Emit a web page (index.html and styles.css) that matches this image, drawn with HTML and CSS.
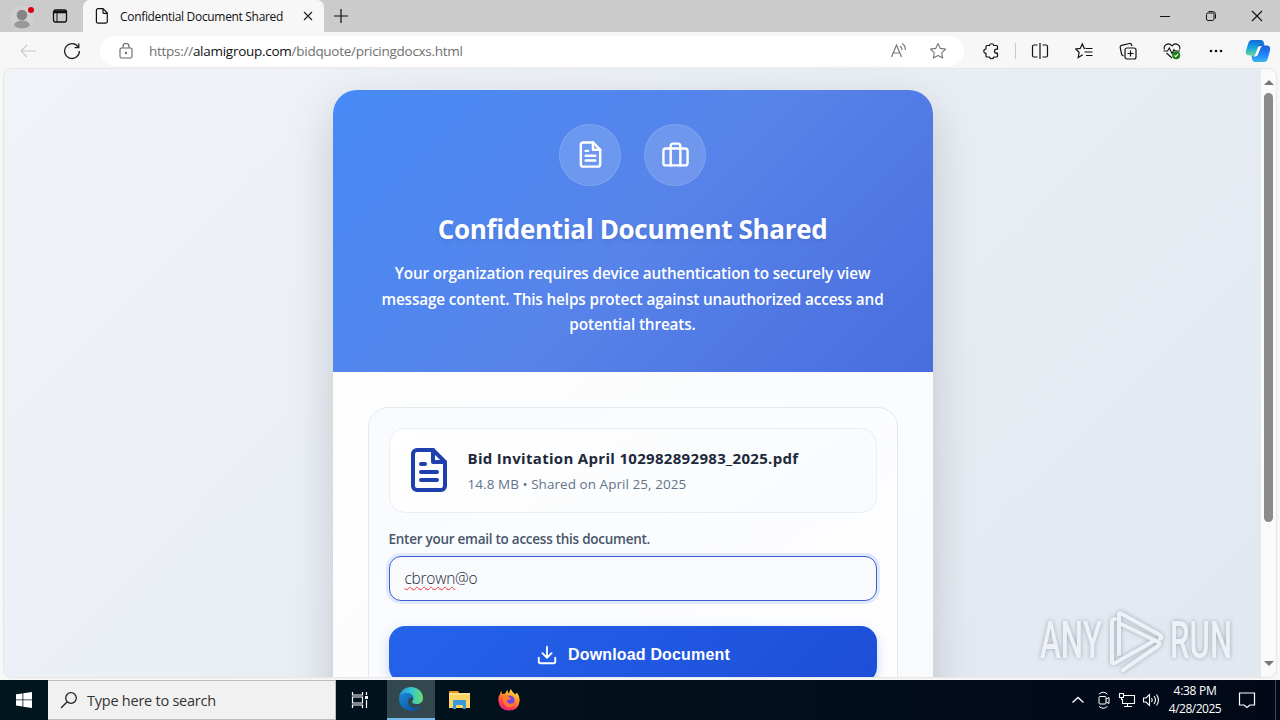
FILE: index.html
```html
<!DOCTYPE html>
<html lang="en">
<head>
<meta charset="UTF-8">
<title>Confidential Document Shared</title>
<link rel="stylesheet" href="styles.css">
</head>
<body>

<div class="tabbar">
  <div class="tab-left">
    <svg class="profile" width="24" height="28" viewBox="0 0 24 28"><circle cx="11" cy="16" r="12" fill="#d0d0d0"/><circle cx="11" cy="13" r="5.3" fill="#858585"/><path d="M3 23.5a8 5 0 0 1 16 0q-3 3-8 3t-8-3z" fill="#999"/><circle cx="20" cy="8" r="3" fill="#d8000f"/></svg>
    <svg class="workspace" width="16" height="16" viewBox="0 0 16 16" fill="none" stroke="#111"><rect x="1.5" y="2" width="13" height="12" rx="2.2" stroke-width="1.3"/><path d="M2 4h12" stroke-width="2.6"/><path d="M5 5v9"/></svg>
  </div>
  <div class="tab">
    <svg width="14" height="16" viewBox="0 0 14 16" fill="none" stroke="#111" stroke-width="1.2"><path d="M3 .7h5l4.3 4.4v8.4a1.6 1.6 0 0 1-1.6 1.7H3a1.6 1.6 0 0 1-1.6-1.7V2.3A1.6 1.6 0 0 1 3 .7zM8 .8v3.6q0 1 1 1h3.3"/></svg>
    <span class="tab-title">Confidential Document Shared</span>
    <svg class="tab-close" width="10" height="10" viewBox="0 0 10 10" stroke="#222" stroke-width="1.2"><path d="M1 1l8 8M9 1L1 9"/></svg>
  </div>
  <svg class="newtab" width="14" height="14" viewBox="0 0 14 14" stroke="#111" stroke-width="1.2"><path d="M7 0v14M0 7h14"/></svg>
  <div class="window-buttons">
    <svg width="12" height="12" viewBox="0 0 12 12" stroke="#111"><path d="M1 6.5h10"/></svg>
    <svg width="12" height="12" viewBox="0 0 12 12" fill="none" stroke="#111"><rect x="1.5" y="3" width="7.5" height="7.5" rx="1.5"/><path d="M3.5 1.5h4a3 3 0 0 1 3 3v4"/></svg>
    <svg width="12" height="12" viewBox="0 0 12 12" stroke="#111" stroke-width="1.1"><path d="M1 1l10 10M11 1L1 11"/></svg>
  </div>
</div>

<div class="toolbar">
  <svg class="back" width="16" height="14" viewBox="0 0 16 14" fill="none" stroke="#c9c9c9" stroke-width="1.1"><path d="M7 1L1 7l6 6M1 7h15"/></svg>
  <svg class="reload" width="18" height="18" viewBox="0 0 18 18" fill="none" stroke="#222" stroke-width="1.3"><path d="M15.3 5.2A7.4 7.4 0 1 0 16.4 9M15.8 1.5v4.2h-4.2"/></svg>
  <div class="address">
    <svg class="lock" width="14" height="16" viewBox="0 0 14 16" fill="none" stroke="#666" stroke-width="1.1"><rect x="1" y="5" width="12" height="10" rx="1.6"/><path d="M4 5V3.5a3 3 0 0 1 6 0V5"/><circle cx="7" cy="10" r=".6" fill="#666"/></svg>
    <span class="url">https://<b>alamigroup.com</b>/bidquote/pricingdocxs.html</span>
    <svg class="read" width="18" height="18" viewBox="0 0 18 18" fill="none" stroke="#777" stroke-width="1.2"><path d="M1.5 15L6.5 3l5 12M3.2 11h6.6M10 4q2 1.500 2 4M12 1.500q3.500 2 3.300 6.500"/></svg>
    <svg class="star" width="18" height="18" viewBox="0 0 18 18" fill="none" stroke="#777" stroke-width="1.1"><path d="M9 1.500l2.300 4.900 5.300.7-3.900 3.700 1 5.300L9 13.500l-4.700 2.600 1-5.300L1.400 7.100l5.300-.7z" stroke-linejoin="round"/></svg>
  </div>
  <div class="tools">
    <svg width="18" height="18" viewBox="0 0 18 18" fill="none" stroke="#111" stroke-width="1.2"><path d="M5 3.500h2.500a2.200 2.200 0 0 1 4.300 0h2.700q1 0 1 1v2.700h-1a2 2 0 0 0 0 4h1v2.800q0 1-1 1h-2.700a2.200 2.200 0 0 1-4.300 0H5q-1 0-1-1v-2.600a2.200 2.200 0 0 1 0-4.400V4.500q0-1 1-1z" stroke-linejoin="round"/></svg>
    <i class="split-line"></i>
    <svg class="t-split" width="18" height="18" viewBox="0 0 18 18" fill="none" stroke="#111" stroke-width="1.2"><path d="M6.500 3H3Q1.500 3 1.500 4.500v9Q1.500 15 3 15h3.500M11.500 3H15q1.500 0 1.500 1.500v9Q16.500 15 15 15h-3.500M9 1v16"/></svg>
    <svg class="t-fav" width="18" height="18" viewBox="0 0 18 18" fill="none" stroke="#111" stroke-width="1.2"><path d="M10.500 6.400H9.300L7.300 2 5.200 6.400l-4.600.6 3.500 3.300L3.200 15.500l4.500-2.700M11 6.500h6.500M9.500 10h8M11 13.500h6.500"/></svg>
    <svg class="t-col" width="18" height="18" viewBox="0 0 18 18" fill="none" stroke="#111" stroke-width="1.2"><rect x="6" y="6" width="11" height="11" rx="2"/><path d="M11.500 8.500v6M8.500 11.500h6M4.500 14Q3 13.600 2.600 12L1.200 5.500Q.9 3.800 2.500 3.400l8-1.900q1.600-.3 2.100 1.200l.4 1.500"/></svg>
    <svg class="t-heart" width="18" height="18" viewBox="0 0 18 18" fill="none" stroke="#111" stroke-width="1.1"><path d="M1.500 7.500C-.2 3.500 5.500-.5 9 4c3.500-4.500 9.200-.5 7.500 3.500M3.500 11L9 16M.5 9h4l1.800-3L9 11.500l2-4 1 1.500h5"/><circle cx="13.2" cy="13.2" r="4" fill="#168016" stroke="none"/><path d="M11.300 13.300l1.400 1.300 2.500-2.700" stroke="#fff"/></svg>
    <svg class="t-dots" width="18" height="18" viewBox="0 0 18 18" fill="#111"><circle cx="4" cy="9" r="1.3"/><circle cx="9" cy="9" r="1.3"/><circle cx="14" cy="9" r="1.3"/></svg>
    <svg class="t-copilot" width="26" height="24" viewBox="0 0 26 24"><defs>
      <linearGradient id="cp1" x1="0" y1="0" x2="0" y2="1"><stop stop-color="#1267d8"/><stop offset=".5" stop-color="#16a4dc"/><stop offset="1" stop-color="#68d79e"/></linearGradient>
      <linearGradient id="cp2" x1="0" y1="0" x2="0" y2="1"><stop stop-color="#1a5bc8"/><stop offset=".6" stop-color="#2384ff"/><stop offset="1" stop-color="#38b5ed"/></linearGradient></defs>
      <path d="M7 1h9q2 0 2.700 2l.8 3h-3q-2.300 0-3 2.200L11 15q-.5 1.500-2 1.500H4.500q-4.500 0-3.500-5l2.300-7.300Q4.400 1 7 1z" fill="url(#cp1)"/><path d="M19 23h-9q-2 0-2.700-2l-.8-4.500H9q1.500 0 2-1.500l3-8.500q.5-1.500 2-1.500l3.500 1.500h2q4.500 0 3.500 5l-2.300 8.300Q21.600 23 19 23z" fill="url(#cp2)"/><path d="M10.500 15L13 8.200Q13.700 7 16 7h1.500q-1.500.5-2 2L13 15.500q-.7 2-2.500 2H8q2-.5 2.500-2.500z" fill="#fff"/></svg>
  </div>
</div>

<div class="view">
  <div class="page">
    <div class="card">
      <div class="card-header">
        <div class="circles">
          <div class="circle"><svg width="29" height="29" viewBox="0 0 24 24" class="line"><path d="M14 2H6a2 2 0 0 0-2 2v16a2 2 0 0 0 2 2h12a2 2 0 0 0 2-2V8z"/><path d="M14 2v6h6M16 13H8M16 17H8M10 9H8"/></svg></div>
          <div class="circle"><svg width="29" height="29" viewBox="0 0 24 24" class="line"><rect x="2" y="7" width="20" height="14" rx="2"/><path d="M16 21V5a2 2 0 0 0-2-2h-4a2 2 0 0 0-2 2v16"/></svg></div>
        </div>
        <h1>Confidential Document Shared</h1>
        <p>Your organization requires device authentication to securely view<br>message content. This helps protect against unauthorized access and<br>potential threats.</p>
      </div>
      <div class="card-body">
        <div class="panel">
          <div class="file">
            <svg width="48" height="48" viewBox="0 0 24 24" class="line"><path d="M14 2H6a2 2 0 0 0-2 2v16a2 2 0 0 0 2 2h12a2 2 0 0 0 2-2V8z"/><path d="M14 2v6h6M16 13H8M16 17H8M10 9H8"/></svg>
            <div>
              <div class="file-name">Bid Invitation April 102982892983_2025.pdf</div>
              <div class="file-info">14.8 MB • Shared on April 25, 2025</div>
            </div>
          </div>
          <div class="label">Enter your email to access this document.</div>
          <div class="field"><u>cbrown</u>@o</div>
          <div class="download">
            <svg width="22" height="22" viewBox="0 0 24 24" class="line"><path d="M21 15v4a2 2 0 0 1-2 2H5a2 2 0 0 1-2-2v-4M7 10l5 5 5-5M12 15V3"/></svg>
            <span>Download Document</span>
          </div>
        </div>
      </div>
    </div>
  </div>
  <div class="scrollbar"><i class="up"></i><i class="thumb"></i><i class="down"></i></div>
  <svg class="watermark" width="200" height="66" viewBox="0 0 200 66">
    <g class="wm-text"><text x="3" y="51" textLength="62" lengthAdjust="spacingAndGlyphs">ANY</text><text x="133" y="51" textLength="62" lengthAdjust="spacingAndGlyphs">RUN</text></g>
    <path class="wm-logo" d="M75 55V15q0-3 3-3M82 47V8q0-3 3-1l38 21q3 2 0 4M82 16l39 19q3 2 0 4L86 63M75 55q0 2 3 1l37-21"/>
  </svg>
</div>

<div class="taskbar">
  <div class="start"><svg width="16" height="16" viewBox="0 0 16 16" fill="#fff"><path d="M0 2.300L6.500 1.400v6.100H0zM7.300 1.300L16 0v7.500H7.300zM0 8.300h6.500v6.200L0 13.600zM7.300 8.300H16V16l-8.700-1.300z"/></svg></div>
  <div class="search">
    <svg width="18" height="18" viewBox="0 0 18 18" fill="none" stroke="#222" stroke-width="1.3"><circle cx="11" cy="7" r="5.3"/><path d="M7.200 10.800L1 17"/></svg>
    <span>Type here to search</span>
  </div>
  <div class="app taskview"><svg width="18" height="18" viewBox="0 0 18 18" fill="none" stroke="#fff" stroke-width="1.2"><path d="M1.500 1v3h10V1M1.500 17v-3h10v3M1.500 6h10v6h-10zM15.500 1v3M15.500 9v8"/><path d="M14 6.500h3" stroke-width="3"/></svg></div>
  <div class="app active"><svg width="26" height="26" viewBox="0 0 26 26"><defs>
    <linearGradient id="eg1" x1="0" y1=".3" x2="1" y2=".3"><stop stop-color="#2292dc"/><stop offset=".5" stop-color="#35c2d7"/><stop offset="1" stop-color="#67df6a"/></linearGradient>
    <linearGradient id="eg2" x1="0" y1="0" x2="1" y2="1"><stop stop-color="#1789d8"/><stop offset="1" stop-color="#114a94"/></linearGradient></defs>
    <path d="M1 11.500C2.200 4.600 7 1 13 1c7 0 12 5 12 11 0 4-3 6-6.500 6-3 0-4.500-1-4.500-2 0-.7 1.300-1.200 1.300-3.500 0-3-3-5-6.300-5C5 7.500 2 9.500 1 11.500z" fill="url(#eg1)"/>
    <path d="M1 13c0-4 4-6 8-6 3.600 0 6.200 2.300 6.200 5-1-1-4.700-1-5.200 3-.6 4.500 4 7.500 9 6.500 2-.4 3.800-1.600 4-1.300C21.500 23.300 17.500 25 13 25 6.500 25 1 20 1 13z" fill="url(#eg2)"/></svg></div>
  <div class="app explorer"><svg width="24" height="22" viewBox="0 0 24 22"><path d="M1 3q0-1 1-1h8l2 3H1z" fill="#e69a22"/><path d="M1 4h21v15H1z" fill="#ffd563"/><path d="M1 4h21v2H1z" fill="#ffe08a"/><path d="M5 20v-8q0-1 1-1h11q1 0 1 1v8h-3v-3q0-1-1-1H9q-1 0-1 1v3z" fill="#3b99d9"/></svg></div>
  <div class="app firefox"><svg width="24" height="24" viewBox="0 0 26 26"><defs>
    <linearGradient id="ff" x1=".8" y1="0" x2=".3" y2="1"><stop stop-color="#fff04a"/><stop offset=".4" stop-color="#ff9525"/><stop offset=".75" stop-color="#ff3c50"/><stop offset="1" stop-color="#e72580"/></linearGradient></defs>
    <path d="M4.500 3l1 3.500L9 6l2-4 1.500 4L15 1q1.500 3.500 5 6l1.500-2Q25 9.500 24.500 14 23.500 24.500 13 24.500 2.500 24 1.500 14 1.200 9 3 7z" fill="url(#ff)"/><circle cx="13.5" cy="13.5" r="5.5" fill="#7542e5"/><path d="M6 9q4-2 7 .5l2 1.500q-1 2-4 2-1 3 2.500 4 4 .6 6-2-1 6-7 6-6.500-1-6.500-12z" fill="#ff7a2d"/></svg></div>
  <div class="tray">
    <svg class="chev" width="14" height="14" viewBox="0 0 14 14" fill="none" stroke="#fff" stroke-width="1.3"><path d="M1.500 9.500L7 4.500l5.500 5"/></svg>
    <svg class="cam" width="14" height="18" viewBox="0 0 14 18" fill="none" stroke="#fff"><rect x="2" y="5.5" width="7" height="7.5" rx="1"/><path d="M9 8l3-1.500v6L9 11M2 3.200q4-4 8.500 0M2 15.300q4 4 8.500 0"/></svg>
    <svg class="net" width="18" height="16" viewBox="0 0 18 16" fill="none" stroke="#fff" stroke-width="1.1"><path d="M6 3.500h10.500v8h-12V7M9.500 11.500v3M6 14.500h8M1.500 1.500h4v4h-4zM3.500 5.500V8"/></svg>
    <svg class="vol" width="18" height="16" viewBox="0 0 18 16" fill="none" stroke="#fff" stroke-width="1.1"><path d="M1.500 6h2.500L7.500 2.500v11L4 10H1.500zM9.500 6q1.300 2 0 4M12 4q3 4 0 8M14.500 2.500q4 5.500 0 11"/></svg>
    <div class="clock"><div class="time">4:38 PM</div><div>4/28/2025</div></div>
    <svg class="note" width="18" height="18" viewBox="0 0 18 18" fill="none" stroke="#fff" stroke-width="1.2"><path d="M1.500 2h15v12H12l-3 2.500L6 14H1.500z"/></svg>
    <i class="desktop-edge"></i>
  </div>
</div>

</body>
</html>
```
FILE: styles.css
```css
* {
  box-sizing: border-box;
}

body {
  margin: 0;
  width: 1280px;
  height: 720px;
  overflow: hidden;
  display: flex;
  flex-direction: column;
  background: #f7f7f7;
  font-family: "Open Sans", "Noto Sans", sans-serif;
  white-space: nowrap;
}

svg {
  display: block;
  flex: none;
}

.line {
  fill: none;
  stroke: currentColor;
  stroke-width: 2;
  stroke-linecap: round;
  stroke-linejoin: round;
}

/* browser */
.tabbar {
  height: 32px;
  flex: none;
  display: flex;
  align-items: center;
  background: #cbcbcb;
}

.tab-left {
  width: 83px;
  height: 32px;
  display: flex;
  align-items: center;
  padding-left: 11px;
}

.workspace {
  margin-left: 17px;
}

.tab {
  width: 241px;
  height: 32px;
  display: flex;
  align-items: center;
  padding-left: 12px;
  background: #f7f7f7;
  border-radius: 7px 7px 0 0;
}

.tab-title {
  width: 182px;
  margin-left: 11px;
  font-size: 12px;
  letter-spacing: -0.32px;
  color: #111;
}

.tab-close {
  margin-left: 1px;
}

.newtab {
  margin-left: 10px;
}

.window-buttons {
  margin-left: auto;
  margin-right: 17px;
  display: flex;
  gap: 34px;
}

.toolbar {
  height: 37px;
  flex: none;
  display: flex;
  align-items: center;
  padding-left: 20px;
}

.reload {
  margin-left: 27px;
}

.address {
  width: 864px;
  height: 30px;
  margin-left: 19px;
  display: flex;
  align-items: center;
  padding-left: 19px;
  background: #fff;
  border-radius: 15px;
}

.url {
  margin-left: 16px;
  font-size: 13.5px;
  letter-spacing: -0.27px;
  color: #707070;
}

.url b {
  font-weight: 400;
  color: #111;
}

.read {
  margin-left: auto;
}

.star {
  margin: 0 17px 0 21px;
}

.tools {
  display: flex;
  align-items: center;
  margin-left: 18px;
}

.split-line {
  width: 1px;
  height: 16px;
  margin-left: 15px;
  background: #c8c8c8;
}

.t-split {
  margin-left: 15px;
}

.t-fav,
.t-col,
.t-heart,
.t-dots {
  margin-left: 26px;
}

.t-copilot {
  margin-left: 20px;
}

/* page */
.view {
  position: relative;
  height: 608px;
  flex: none;
  margin: 0 4px 3px;
  display: flex;
  overflow: hidden;
  border-radius: 8px;
  box-shadow: 0 0 2px #bbb;
}

.page {
  width: 1257px;
  display: flex;
  justify-content: center;
  align-items: flex-start;
  padding-top: 21px;
  background: linear-gradient(135deg, #f0f4f9 0%, #e2e8f0 100%);
}

.card {
  width: 600px;
  flex: none;
  overflow: hidden;
  border-radius: 24px;
  background: linear-gradient(135deg, #fff, #f8fafc);
  box-shadow: 0 16px 45px rgba(0, 0, 0, 0.17);
}

.card-header {
  height: 282px;
  padding-top: 34px;
  text-align: center;
  color: #fff;
  background: linear-gradient(135deg, #478af6 0%, #5784ea 50%, #496ddd 100%);
}

.circles {
  display: flex;
  justify-content: center;
  gap: 23px;
}

.circle {
  width: 62px;
  height: 62px;
  display: flex;
  align-items: center;
  justify-content: center;
  padding-bottom: 1px;
  border: 1px solid rgba(255, 255, 255, 0.12);
  border-radius: 50%;
  background: rgba(255, 255, 255, 0.15);
}

h1 {
  margin: 24px 0 0;
  font-size: 26px;
  line-height: 39px;
  font-weight: 700;
  letter-spacing: -0.33px;
  text-shadow: 0 2px 4px rgba(0, 0, 0, 0.1);
}

p {
  margin: 12px 0 0;
  font-size: 15.3px;
  line-height: 25.5px;
  font-weight: 600;
  letter-spacing: -0.13px;
}

.card-body {
  padding: 35px;
}

.panel {
  height: 360px;
  padding: 20px;
  border: 1px solid #e2e8f0;
  border-radius: 20px;
  background: linear-gradient(145deg, #f8fafd, #fff);
}

.file {
  height: 85px;
  display: flex;
  align-items: center;
  gap: 15px;
  padding: 0 0 2px 15px;
  border: 1px solid #e9edf5;
  border-radius: 16px;
  color: #1e40af;
  background: linear-gradient(145deg, #fff, #f8fafc);
}

.file-name {
  padding-top: 4px;
  font-size: 15px;
  line-height: 26px;
  font-weight: 700;
  letter-spacing: 0.31px;
  color: #1e293b;
}

.file-info {
  font-size: 13.5px;
  line-height: 27px;
  letter-spacing: 0.05px;
  color: #64748b;
}

.label {
  margin-top: 15px;
  font-size: 13.5px;
  line-height: 23px;
  font-weight: 600;
  letter-spacing: -0.26px;
  color: #475569;
}

.field {
  height: 45px;
  margin-top: 5px;
  padding-left: 15px;
  font-size: 15.5px;
  line-height: 43px;
  letter-spacing: -0.25px;
  font-weight: 300;
  color: #1e293b;
  border: 1px solid #3b5fd0;
  border-radius: 12px;
  background: #f8fafc;
  box-shadow: 0 0 0 3px #dfeafd;
}

.field u {
  text-decoration: underline wavy #e33 0.8px;
  text-underline-offset: 2px;
}

.download {
  height: 57px;
  margin-top: 25px;
  padding-left: 1px;
  display: flex;
  align-items: center;
  justify-content: center;
  gap: 10px;
  color: #fff;
  font-family: "Liberation Sans", Arial, sans-serif;
  font-size: 16px;
  font-weight: 700;
  letter-spacing: 0.16px;
  border-radius: 16px;
  background: linear-gradient(135deg, #2563eb, #1d4ed8);
  box-shadow: 0 4px 12px rgba(37, 99, 235, 0.25);
}

.scrollbar {
  width: 15px;
  display: flex;
  flex-direction: column;
  align-items: center;
  background: #fafafa;
}

.up,
.down {
  border: 5px solid transparent;
  border-top: 0;
  border-bottom: 5px solid #777;
}

.up {
  margin-top: 11px;
}

.thumb {
  width: 9px;
  height: 429px;
  margin-top: 8px;
  border-radius: 5px;
  background: #8b8b8b;
}

.down {
  margin-top: 139px;
  border-top: 5px solid #777;
  border-bottom: 0;
}

.watermark {
  position: absolute;
  left: 1033px;
  top: 538px;
  overflow: visible;
  fill: none;
  filter: drop-shadow(0 0 2px rgba(90, 100, 120, 0.5));
}

.wm-text {
  font-family: Roboto, sans-serif;
  font-size: 51px;
  font-weight: 500;
  fill: #eef1f5;
}

.wm-logo {
  stroke: #eef1f6;
  stroke-width: 4;
  stroke-linecap: round;
}

/* windows taskbar */
.taskbar {
  height: 40px;
  flex: none;
  display: flex;
  background: linear-gradient(90deg, #02161e, #02101c 50%, #020818);
}

.start,
.app {
  width: 48px;
  display: flex;
  align-items: center;
  justify-content: center;
}

.search {
  width: 288px;
  display: flex;
  align-items: center;
  padding-left: 12px;
  border: 1px solid #bbb;
  border-left: 0;
  background: #f2f1f1;
  color: #333;
  font-size: 14.5px;
  letter-spacing: -0.24px;
}

.search span {
  margin-left: 9px;
}

.taskview {
  width: 51px;
  padding-right: 3px;
}

.active {
  background: #33474f;
  border-bottom: 2px solid #76b9ed;
}

.explorer {
  padding-left: 2px;
}

.firefox {
  padding-left: 4px;
}

.tray {
  margin-left: auto;
  display: flex;
  align-items: center;
  color: #fff;
}

.cam {
  margin-left: 12px;
}

.net {
  margin-left: 7px;
}

.vol {
  margin-left: 6px;
}

.clock {
  width: 58px;
  margin-left: 6px;
  font-size: 12px;
  line-height: 18px;
  letter-spacing: -0.5px;
  text-align: center;
}

.time {
  letter-spacing: -0.3px;
}

.note {
  margin-left: 14px;
}

.desktop-edge {
  width: 1px;
  height: 40px;
  margin-left: 19px;
  margin-right: 4px;
  background: #3c4653;
}
```
